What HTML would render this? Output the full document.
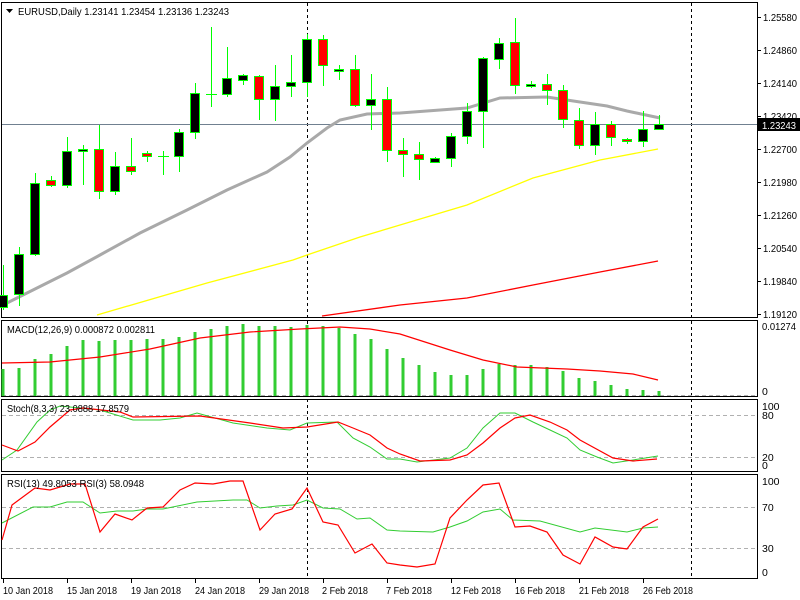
<!DOCTYPE html>
<html><head><meta charset="utf-8"><style>
html,body{margin:0;padding:0;background:#fff;width:800px;height:600px;overflow:hidden}
svg{display:block;font-family:"Liberation Sans",sans-serif;font-size:10.5px}
</style></head><body>
<svg width="800" height="600" viewBox="0 0 800 600" xmlns="http://www.w3.org/2000/svg">
<rect width="800" height="600" fill="#fff"/>
<g stroke="#000" stroke-width="1" fill="none">
<rect x="1.5" y="2.5" width="756" height="315"/>
<rect x="1.5" y="320.5" width="756" height="76"/>
<rect x="1.5" y="399.5" width="756" height="72"/>
<rect x="1.5" y="474.5" width="756" height="104"/>
</g>
<g stroke="#000" stroke-dasharray="3,3">
<line x1="307.5" y1="3" x2="307.5" y2="578"/>
<line x1="691.5" y1="3" x2="691.5" y2="578"/>
</g>
<g stroke="#b0b0b0" stroke-dasharray="4,3">
<line x1="2" y1="415.5" x2="757" y2="415.5"/>
<line x1="2" y1="457.5" x2="757" y2="457.5"/>
<line x1="2" y1="507.5" x2="757" y2="507.5"/>
<line x1="2" y1="548.5" x2="757" y2="548.5"/>
<line x1="2" y1="395.5" x2="757" y2="395.5"/>
</g>
<line x1="2" y1="124.5" x2="757" y2="124.5" stroke="#708090"/>
<polyline fill="none" stroke="#ff0000" stroke-width="1.3" points="322,316 400,305 467,298 533,285 600,272 658,261"/>
<polyline fill="none" stroke="#ffff00" stroke-width="1.3" points="97,315 207,283 293,260 307,255 360,237 400,225 467,205 533,178 600,160 658,149"/>
<polyline fill="none" stroke="#a9a9a9" stroke-width="3" points="3,305 7,303 33,290 67,273 100,255 140,233 187,210 227,190 267,172 290,157 307,143 327,128 340,120 367,114 400,113 467,108 500,98 547,97 580,102 607,106 627,111 660,118"/>
<g stroke="#00ff00" stroke-width="1">
<line x1="3.5" y1="265" x2="3.5" y2="310"/><rect x="-1.5" y="295.5" width="9" height="12" fill="#000"/>
<line x1="19.5" y1="247" x2="19.5" y2="306"/><rect x="14.5" y="254.5" width="9" height="40" fill="#000"/>
<line x1="35.5" y1="173" x2="35.5" y2="256"/><rect x="30.5" y="183.5" width="9" height="71" fill="#000"/>
<line x1="51.5" y1="176" x2="51.5" y2="187"/><rect x="46.5" y="180.5" width="9" height="5" fill="#f00"/>
<line x1="67.5" y1="137" x2="67.5" y2="188"/><rect x="62.5" y="151.5" width="9" height="34" fill="#000"/>
<line x1="83.5" y1="145" x2="83.5" y2="185"/><rect x="78.5" y="149.5" width="9" height="2" fill="#000"/>
<line x1="99.5" y1="125" x2="99.5" y2="199"/><rect x="94.5" y="149.5" width="9" height="42" fill="#f00"/>
<line x1="115.5" y1="152" x2="115.5" y2="195"/><rect x="110.5" y="166.5" width="9" height="25" fill="#000"/>
<line x1="131.5" y1="138" x2="131.5" y2="175"/><rect x="126.5" y="166.5" width="9" height="5" fill="#f00"/>
<line x1="147.5" y1="151" x2="147.5" y2="162"/><rect x="142.5" y="153.5" width="9" height="3" fill="#f00"/>
<line x1="163.5" y1="151" x2="163.5" y2="175"/><line x1="158" y1="156.5" x2="169" y2="156.5"/>
<line x1="179.5" y1="129" x2="179.5" y2="172"/><rect x="174.5" y="132.5" width="9" height="24" fill="#000"/>
<line x1="195.5" y1="83" x2="195.5" y2="139"/><rect x="190.5" y="93.5" width="9" height="39" fill="#000"/>
<line x1="211.5" y1="27" x2="211.5" y2="107"/><line x1="206" y1="94.5" x2="217" y2="94.5"/>
<line x1="227.5" y1="47" x2="227.5" y2="97"/><rect x="222.5" y="78.5" width="9" height="16" fill="#000"/>
<line x1="243.5" y1="74" x2="243.5" y2="85"/><rect x="238.5" y="75.5" width="9" height="5" fill="#000"/>
<line x1="259.5" y1="75" x2="259.5" y2="120"/><rect x="254.5" y="76.5" width="9" height="23" fill="#f00"/>
<line x1="275.5" y1="65" x2="275.5" y2="121"/><rect x="270.5" y="86.5" width="9" height="13" fill="#000"/>
<line x1="291.5" y1="55" x2="291.5" y2="97"/><rect x="286.5" y="82.5" width="9" height="4" fill="#000"/>
<line x1="307.5" y1="34" x2="307.5" y2="97"/><rect x="302.5" y="39.5" width="9" height="43" fill="#000"/>
<line x1="323.5" y1="35" x2="323.5" y2="86"/><rect x="318.5" y="39.5" width="9" height="26" fill="#f00"/>
<line x1="339.5" y1="65" x2="339.5" y2="80"/><rect x="334.5" y="69.5" width="9" height="2" fill="#000"/>
<line x1="355.5" y1="55" x2="355.5" y2="107"/><rect x="350.5" y="69.5" width="9" height="36" fill="#f00"/>
<line x1="371.5" y1="74" x2="371.5" y2="130"/><rect x="366.5" y="99.5" width="9" height="6" fill="#000"/>
<line x1="387.5" y1="87" x2="387.5" y2="162"/><rect x="382.5" y="99.5" width="9" height="51" fill="#f00"/>
<line x1="403.5" y1="138" x2="403.5" y2="177"/><rect x="398.5" y="150.5" width="9" height="4" fill="#f00"/>
<line x1="419.5" y1="142" x2="419.5" y2="180"/><rect x="414.5" y="154.5" width="9" height="5" fill="#f00"/>
<line x1="435.5" y1="157" x2="435.5" y2="162"/><rect x="430.5" y="158.5" width="9" height="4" fill="#000"/>
<line x1="451.5" y1="133" x2="451.5" y2="167"/><rect x="446.5" y="136.5" width="9" height="22" fill="#000"/>
<line x1="467.5" y1="103" x2="467.5" y2="144"/><rect x="462.5" y="111.5" width="9" height="25" fill="#000"/>
<line x1="483.5" y1="57" x2="483.5" y2="148"/><rect x="478.5" y="58.5" width="9" height="53" fill="#000"/>
<line x1="499.5" y1="38" x2="499.5" y2="69"/><rect x="494.5" y="43.5" width="9" height="16" fill="#000"/>
<line x1="515.5" y1="18" x2="515.5" y2="94"/><rect x="510.5" y="42.5" width="9" height="43" fill="#f00"/>
<line x1="531.5" y1="81" x2="531.5" y2="88"/><rect x="526.5" y="84.5" width="9" height="2" fill="#000"/>
<line x1="547.5" y1="74" x2="547.5" y2="105"/><rect x="542.5" y="84.5" width="9" height="6" fill="#f00"/>
<line x1="563.5" y1="85" x2="563.5" y2="128"/><rect x="558.5" y="90.5" width="9" height="29" fill="#f00"/>
<line x1="579.5" y1="108" x2="579.5" y2="149"/><rect x="574.5" y="120.5" width="9" height="25" fill="#f00"/>
<line x1="595.5" y1="112" x2="595.5" y2="155"/><rect x="590.5" y="124.5" width="9" height="21" fill="#000"/>
<line x1="611.5" y1="121" x2="611.5" y2="146"/><rect x="606.5" y="124.5" width="9" height="13" fill="#f00"/>
<line x1="627.5" y1="138" x2="627.5" y2="144"/><rect x="622.5" y="139.5" width="9" height="2" fill="#f00"/>
<line x1="643.5" y1="111" x2="643.5" y2="147"/><rect x="638.5" y="129.5" width="9" height="12" fill="#000"/>
<line x1="659.5" y1="115" x2="659.5" y2="130"/><rect x="654.5" y="124.5" width="9" height="5" fill="#000"/>
</g>
<g stroke="#32cd32" stroke-width="3">
<line x1="3" y1="396" x2="3" y2="369"/><line x1="19" y1="396" x2="19" y2="368"/><line x1="35" y1="396" x2="35" y2="359"/><line x1="51" y1="396" x2="51" y2="354"/><line x1="67" y1="396" x2="67" y2="346"/><line x1="83" y1="396" x2="83" y2="340"/><line x1="99" y1="396" x2="99" y2="341"/><line x1="115" y1="396" x2="115" y2="340"/><line x1="131" y1="396" x2="131" y2="340"/><line x1="147" y1="396" x2="147" y2="339"/><line x1="163" y1="396" x2="163" y2="339"/><line x1="179" y1="396" x2="179" y2="337"/><line x1="195" y1="396" x2="195" y2="332"/><line x1="211" y1="396" x2="211" y2="329"/><line x1="227" y1="396" x2="227" y2="326"/><line x1="243" y1="396" x2="243" y2="324"/><line x1="259" y1="396" x2="259" y2="326"/><line x1="275" y1="396" x2="275" y2="326"/><line x1="291" y1="396" x2="291" y2="327"/><line x1="307" y1="396" x2="307" y2="325"/><line x1="323" y1="396" x2="323" y2="326"/><line x1="339" y1="396" x2="339" y2="328"/><line x1="355" y1="396" x2="355" y2="334"/><line x1="371" y1="396" x2="371" y2="339"/><line x1="387" y1="396" x2="387" y2="349"/><line x1="403" y1="396" x2="403" y2="358"/><line x1="419" y1="396" x2="419" y2="365"/><line x1="435" y1="396" x2="435" y2="372"/><line x1="451" y1="396" x2="451" y2="375"/><line x1="467" y1="396" x2="467" y2="375"/><line x1="483" y1="396" x2="483" y2="369"/><line x1="499" y1="396" x2="499" y2="364"/><line x1="515" y1="396" x2="515" y2="365"/><line x1="531" y1="396" x2="531" y2="365"/><line x1="547" y1="396" x2="547" y2="367"/><line x1="563" y1="396" x2="563" y2="371"/><line x1="579" y1="396" x2="579" y2="378"/><line x1="595" y1="396" x2="595" y2="381"/><line x1="611" y1="396" x2="611" y2="385"/><line x1="627" y1="396" x2="627" y2="389"/><line x1="643" y1="396" x2="643" y2="390"/><line x1="659" y1="396" x2="659" y2="391"/>
</g>
<polyline fill="none" stroke="#f00" stroke-width="1.2" points="2,363 50,362 100,357 150,349 200,338 250,332 300,329 340,327 370,329 400,334 450,350 483,360 517,367 567,369 600,371 633,374 658,380"/>
<polyline fill="none" stroke="#32cd32" stroke-width="1" points="2,460 17,450 37,422 50,410 60,406 100,410 133,420 160,420 180,418 197,413 233,423 267,428 290,430 307,423 337,422 353,438 370,447 387,459 400,459 417,462 450,458 467,448 483,428 500,413 515,413 533,422 550,430 567,438 580,450 597,457 613,463 633,460 658,456"/>
<polyline fill="none" stroke="#f00" stroke-width="1.2" points="2,445 18,451 35,442 50,427 70,410 83,408 120,412 133,417 200,416 250,423 283,428 307,427 338,422 353,428 370,435 387,448 400,454 420,461 450,460 467,455 483,443 500,428 515,418 530,415 550,422 567,430 580,440 613,458 633,461 657,459"/>
<polyline fill="none" stroke="#32cd32" stroke-width="1" points="2,523 33,507 50,507 67,502 83,502 100,513 117,511 133,511 147,509 163,509 197,502 233,500 247,500 260,508 277,506 293,505 307,500 323,508 340,509 357,519 370,518 387,530 400,531 433,532 450,527 467,521 483,512 500,509 513,520 540,521 580,532 595,528 627,532 643,528 658,527"/>
<polyline fill="none" stroke="#f00" stroke-width="1.2" points="2,540 12,505 35,488 50,490 70,484 85,484 100,532 115,514 132,520 147,508 163,507 180,490 195,483 213,484 230,481 243,481 260,530 275,514 292,509 307,488 323,522 338,525 355,553 372,544 387,563 400,565 417,567 435,564 450,518 467,500 483,485 499,483 515,527 530,526 547,532 563,555 580,564 595,537 613,547 627,549 643,527 658,519"/>
<g stroke="#000">
<line x1="758" y1="17.5" x2="761" y2="17.5"/><line x1="758" y1="50.5" x2="761" y2="50.5"/><line x1="758" y1="83.5" x2="761" y2="83.5"/><line x1="758" y1="116.5" x2="761" y2="116.5"/><line x1="758" y1="149.5" x2="761" y2="149.5"/><line x1="758" y1="182.5" x2="761" y2="182.5"/><line x1="758" y1="215.5" x2="761" y2="215.5"/><line x1="758" y1="248.5" x2="761" y2="248.5"/><line x1="758" y1="281.5" x2="761" y2="281.5"/><line x1="758" y1="314.5" x2="761" y2="314.5"/>
<line x1="3.5" y1="579" x2="3.5" y2="583"/><line x1="67.5" y1="579" x2="67.5" y2="583"/><line x1="131.5" y1="579" x2="131.5" y2="583"/><line x1="195.5" y1="579" x2="195.5" y2="583"/><line x1="259.5" y1="579" x2="259.5" y2="583"/><line x1="323.5" y1="579" x2="323.5" y2="583"/><line x1="387.5" y1="579" x2="387.5" y2="583"/><line x1="451.5" y1="579" x2="451.5" y2="583"/><line x1="515.5" y1="579" x2="515.5" y2="583"/><line x1="579.5" y1="579" x2="579.5" y2="583"/><line x1="643.5" y1="579" x2="643.5" y2="583"/>
</g>
<g fill="#000">
<text x="763" y="21" textLength="34" lengthAdjust="spacingAndGlyphs">1.25580</text><text x="763" y="54" textLength="34" lengthAdjust="spacingAndGlyphs">1.24860</text><text x="763" y="87" textLength="34" lengthAdjust="spacingAndGlyphs">1.24140</text><text x="763" y="120" textLength="34" lengthAdjust="spacingAndGlyphs">1.23420</text><text x="763" y="153" textLength="34" lengthAdjust="spacingAndGlyphs">1.22700</text><text x="763" y="186" textLength="34" lengthAdjust="spacingAndGlyphs">1.21980</text><text x="763" y="219" textLength="34" lengthAdjust="spacingAndGlyphs">1.21260</text><text x="763" y="252" textLength="34" lengthAdjust="spacingAndGlyphs">1.20540</text><text x="763" y="285" textLength="34" lengthAdjust="spacingAndGlyphs">1.19840</text><text x="763" y="318" textLength="34" lengthAdjust="spacingAndGlyphs">1.19120</text>
<text x="762" y="330" textLength="34" lengthAdjust="spacingAndGlyphs">0.01274</text><text x="762" y="395">0</text>
<text x="762" y="410">100</text><text x="762" y="419">80</text><text x="762" y="461">20</text><text x="762" y="469">0</text>
<text x="762" y="485">100</text><text x="762" y="511">70</text><text x="762" y="552">30</text><text x="762" y="576">0</text>
<text x="3" y="594" textLength="50" lengthAdjust="spacingAndGlyphs">10 Jan 2018</text><text x="67" y="594" textLength="50" lengthAdjust="spacingAndGlyphs">15 Jan 2018</text><text x="131" y="594" textLength="50" lengthAdjust="spacingAndGlyphs">19 Jan 2018</text><text x="195" y="594" textLength="50" lengthAdjust="spacingAndGlyphs">24 Jan 2018</text><text x="259" y="594" textLength="50" lengthAdjust="spacingAndGlyphs">29 Jan 2018</text><text x="322" y="594" textLength="46" lengthAdjust="spacingAndGlyphs">2 Feb 2018</text><text x="386" y="594" textLength="46" lengthAdjust="spacingAndGlyphs">7 Feb 2018</text><text x="451" y="594" textLength="50" lengthAdjust="spacingAndGlyphs">12 Feb 2018</text><text x="515" y="594" textLength="50" lengthAdjust="spacingAndGlyphs">16 Feb 2018</text><text x="579" y="594" textLength="50" lengthAdjust="spacingAndGlyphs">21 Feb 2018</text><text x="643" y="594" textLength="50" lengthAdjust="spacingAndGlyphs">26 Feb 2018</text>
<path d="M6,9 L13,9 L9.5,13 Z"/>
<text x="18" y="15" textLength="211" lengthAdjust="spacingAndGlyphs">EURUSD,Daily  1.23141 1.23454 1.23136 1.23243</text>
<text x="7" y="333" textLength="148" lengthAdjust="spacingAndGlyphs">MACD(12,26,9) 0.000872 0.002811</text>
<text x="7" y="412" textLength="122" lengthAdjust="spacingAndGlyphs">Stoch(8,3,3) 23.0888 17.8579</text>
<text x="7" y="487" textLength="137" lengthAdjust="spacingAndGlyphs">RSI(13) 49.8053  RSI(3) 58.0948</text>
</g>
<rect x="758" y="118" width="42" height="13" fill="#000"/>
<text x="762" y="129" fill="#fff" textLength="34" lengthAdjust="spacingAndGlyphs">1.23243</text>
</svg>
</body></html>
